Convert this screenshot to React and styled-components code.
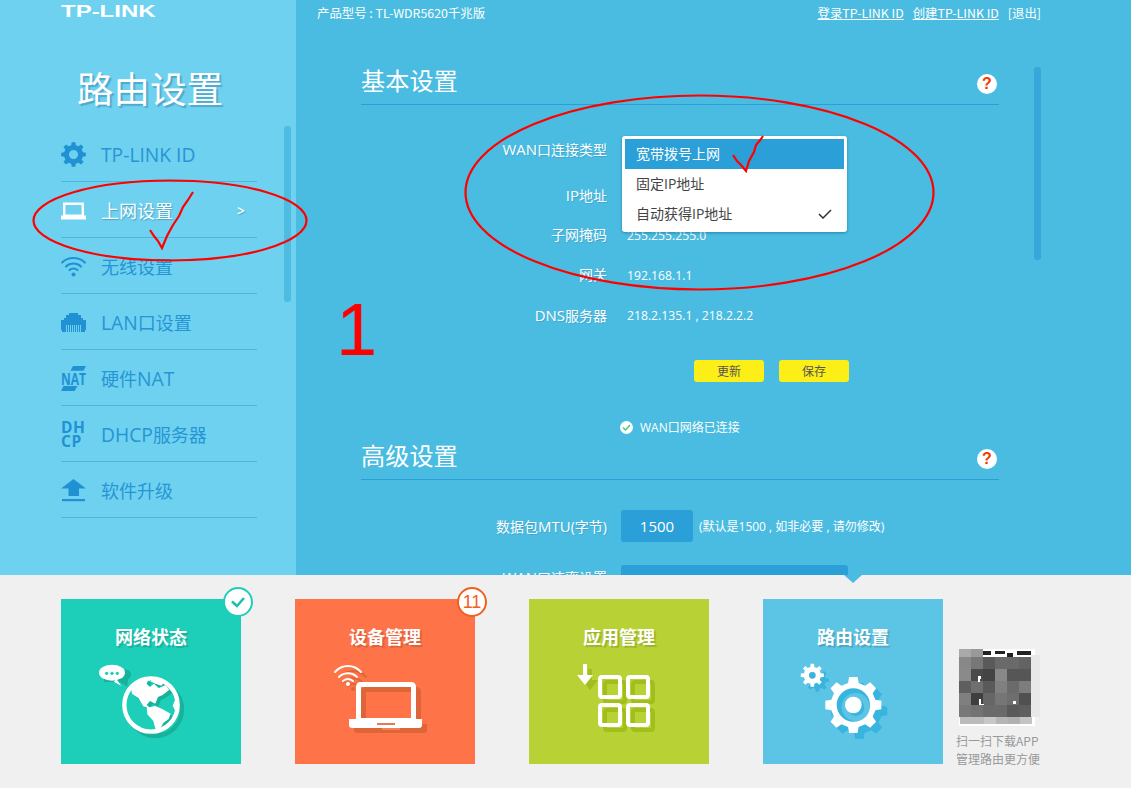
import React from "react";
import styled, { createGlobalStyle } from "styled-components";

const SANS = `"Open Sans", "Noto Sans CJK SC", sans-serif`;

const Global = createGlobalStyle`
  html, body { margin: 0; padding: 0; background: #f0f0f0; }
  body { font-family: ${SANS}; }
`;

const Page = styled.div`
  position: relative;
  width: 1131px;
  height: 788px;
  overflow: hidden;
  display: flex;
  flex-direction: column;
`;
const Upper = styled.div`
  height: 575px;
  display: flex;
  overflow: hidden;
  flex: none;
`;

/* Latin runs sit a little wider in the reference's UI font */
const Lat = styled.span`
  font-size: 1.07em;
`;
const mix = (text) =>
  text.split(/([A-Za-z][A-Za-z -]*)/).map((part, i) => (i % 2 ? <Lat key={i}>{part}</Lat> : part));

/* ---------- sidebar ---------- */
const Sidebar = styled.aside`
  position: relative;
  width: 296px;
  flex: none;
  background: #6ed1f0;
  padding-left: 61px;
  box-sizing: border-box;
`;
const Logo = styled.div`
  margin-top: 2px;
  height: 20px;
  font-family: "Liberation Sans", sans-serif;
  font-weight: 700;
  font-size: 17px;
  line-height: 20px;
  color: #fff;
  transform: scaleX(1.41);
  transform-origin: left center;
`;
const SideTitle = styled.h1`
  margin: 41px 0 13px 16px;
  font-size: 36.5px;
  line-height: 50px;
  height: 50px;
  font-weight: 400;
  color: #fff;
  text-shadow: 2px 2px 1px rgba(40, 120, 160, 0.45);
  font-family: "Noto Sans CJK SC", sans-serif;
`;
const Nav = styled.nav`
  width: 196px;
  display: flex;
  flex-direction: column;
`;
const NavRow = styled.div`
  position: relative;
  height: 56px;
  box-sizing: border-box;
  padding-top: 1px;
  border-bottom: 1px solid #4db6d9;
  display: flex;
  align-items: center;
  gap: 15px;
  font-size: 18px;
  color: ${(p) => (p.$active ? "#fff" : "#2795d4")};
  text-shadow: ${(p) => (p.$active ? "1px 1px 1px rgba(40,120,160,.5)" : "none")};
`;
const NavIcon = styled.span`
  width: 25px;
  height: 25px;
  flex: none;
  display: flex;
  align-items: center;
  justify-content: center;
  svg { display: block; overflow: visible; }
`;
const NavArrow = styled.span`
  margin-left: auto;
  margin-right: 12px;
  font-size: 14px;
  font-weight: 600;
`;
const DhcpMark = styled.span`
  display: block;
  width: 25px;
  font: 700 15.5px/14px "Open Sans", sans-serif;
  color: #2092d4;
  letter-spacing: 0.5px;
  white-space: pre-line;
`;
const Thumb = styled.div`
  position: absolute;
  left: ${(p) => p.$x}px;
  top: ${(p) => p.$y}px;
  height: ${(p) => p.$h}px;
  width: 7px;
  border-radius: 3px;
  background: ${(p) => p.$c};
`;

/* ---------- main ---------- */
const Main = styled.main`
  position: relative;
  flex: 1;
  background: #4abce1;
  color: #fff;
`;
const TopBar = styled.header`
  height: 26px;
  padding: 0 90px 0 21px;
  display: flex;
  align-items: center;
  font-size: 12.4px;
  font-family: "Noto Sans CJK SC", sans-serif;
`;
const TopLink = styled.a`
  color: #fff;
  text-decoration: ${(p) => (p.$plain ? "none" : "underline")};
  margin-left: ${(p) => (p.$gap ? `${p.$gap}px` : "auto")};
`;
const Content = styled.div`
  margin-left: 65px;
  width: 638px;
`;
const SectionHead = styled.div`
  height: 44px;
  box-sizing: border-box;
  border-bottom: 1px solid #2b9dd8;
  padding: 0 2px 8px 0;
  display: flex;
  align-items: flex-end;
  justify-content: space-between;
  margin-top: ${(p) => p.$top}px;
`;
const SectionTitle = styled.h2`
  margin: 0;
  font-size: 24.200px;
  line-height: 32px;
  font-weight: 400;
  font-family: "Noto Sans CJK SC", sans-serif;
`;
const Help = styled.span`
  width: 20px;
  height: 20px;
  margin-bottom: 2px;
  border-radius: 50%;
  background: #fff;
  color: #ef3a00;
  font: 700 16px/20px "Liberation Sans", sans-serif;
  text-align: center;
`;
const Form = styled.div`
  margin-top: 24px;
`;
const Row = styled.div`
  height: 40px;
  display: flex;
  align-items: center;
  margin-bottom: ${(p) => p.$after || 0}px;
`;
const Label = styled.label`
  width: 246px;
  flex: none;
  text-align: right;
  font-size: 14px;
  line-height: 20px;
  white-space: nowrap;
  margin-bottom: ${(p) => p.$lift || 0}px;
  text-shadow: 1px 1px 0 rgba(40, 120, 160, 0.3);
`;
const Value = styled.div`
  position: relative;
  margin: 1px 0 0 20px;
  font-size: 12.2px;
  line-height: 18px;
`;
const Dropdown = styled.ul`
  position: absolute;
  z-index: 2;
  left: -5px;
  top: -14px;
  width: 225px;
  height: 96px;
  box-sizing: border-box;
  margin: 0;
  padding: 3px;
  list-style: none;
  background: #fff;
  border-radius: 3px;
  box-shadow: 0 1px 3px rgba(0, 70, 110, 0.45);
`;
const DropItem = styled.li`
  height: 30px;
  display: flex;
  align-items: center;
  justify-content: space-between;
  padding: 0 12px 0 11px;
  font-size: 14px;
  color: ${(p) => (p.$on ? "#fff" : "#444")};
  background: ${(p) => (p.$on ? "#2a9fd8" : "transparent")};
`;
const Buttons = styled.div`
  margin: 25px 0 0 333px;
  display: flex;
  gap: 15px;
`;
const YellowButton = styled.button`
  width: 70px;
  height: 22px;
  padding: 0;
  border: 0;
  border-radius: 3px;
  background: #fcee17;
  color: #555;
  font-size: 12px;
  font-family: inherit;
`;
const Status = styled.div`
  margin: 37px 0 1px 259px;
  height: 16px;
  display: flex;
  align-items: center;
  gap: 7px;
  font-size: 12px;
`;
const StatusDot = styled.span`
  width: 13px;
  height: 13px;
  border-radius: 50%;
  background: #fff;
  display: flex;
  align-items: center;
  justify-content: center;
`;
const FieldRow = styled.div`
  display: flex;
  align-items: center;
  height: 32px;
  margin-top: ${(p) => p.$top}px;
`;
const FieldBox = styled.div`
  margin-left: 14px;
  width: ${(p) => p.$w}px;
  height: 32px;
  flex: none;
  border-radius: 3px;
  background: #2a9fd8;
  font-size: 15px;
  line-height: 32px;
  text-align: center;
`;
const Hint = styled.span`
  margin-left: 6px;
  font-size: 12px;
  white-space: nowrap;
`;

/* ---------- dock ---------- */
const Dock = styled.section`
  flex: 1;
  background: #f0f0f0;
  padding: 24px 0 0 61px;
  display: flex;
  align-items: flex-start;
`;
const Tiles = styled.div`
  display: flex;
  gap: 54px;
`;
const Tile = styled.div`
  position: relative;
  width: 180px;
  height: 165px;
  background: ${(p) => p.$bg};
  display: flex;
  flex-direction: column;
  align-items: center;
`;
const TileTitle = styled.div`
  margin-top: 25px;
  height: 26px;
  font-size: 18px;
  line-height: 25px;
  font-weight: 700;
  color: #fff;
  font-family: "Noto Sans CJK SC", sans-serif;
  text-shadow: 2px 2px 1px rgba(0, 0, 0, 0.15);
`;
const TileArt = styled.svg`
  display: block;
  width: 180px;
  height: 114px;
`;
const Badge = styled.span`
  position: absolute;
  top: -12px;
  right: -12px;
  width: 30px;
  height: 30px;
  box-sizing: border-box;
  border: 2.5px solid ${(p) => p.$c};
  border-radius: 50%;
  background: #fff;
  color: ${(p) => p.$c};
  font: 400 18px/25px "Liberation Sans", sans-serif;
  text-align: center;
  display: flex;
  align-items: center;
  justify-content: center;
`;
const Pointer = styled.span`
  position: absolute;
  top: -24px;
  left: 81px;
  width: 0;
  height: 0;
  border-left: 9px solid transparent;
  border-right: 9px solid transparent;
  border-top: 8px solid #4abce1;
`;
const AppBox = styled.div`
  margin: 50px 0 0 13px;
  width: 88px;
  color: #999;
  font-size: 12px;
  line-height: 18px;
  font-family: "Noto Sans CJK SC", sans-serif;
  svg { display: block; margin: 0 0 6px 3px; }
`;

/* ---------- annotations ---------- */
const Marks = styled.svg`
  position: absolute;
  left: 0;
  top: 0;
  width: 1131px;
  height: 788px;
  pointer-events: none;
  z-index: 5;
`;
const BigOne = styled.div`
  position: absolute;
  z-index: 5;
  left: 336px;
  top: 287px;
  color: #f00;
  font: 400 74px/85px "Liberation Sans", sans-serif;
`;

/* ---------- drawings ---------- */
function gear(cx, cy, ro, ri, n, start = -Math.PI / 2) {
  const pts = [];
  const step = (Math.PI * 2) / n;
  for (let i = 0; i < n; i++) {
    const a = start + i * step;
    const wi = step * 0.3;
    const wo = step * 0.19;
    [[ri, -wi], [ro, -wo], [ro, wo], [ri, wi]].forEach(([r, d]) => {
      pts.push(`${(cx + r * Math.cos(a + d)).toFixed(2)} ${(cy + r * Math.sin(a + d)).toFixed(2)}`);
    });
  }
  return "M" + pts.join("L") + "Z";
}

const Blue = "#2092d4";

const IconGear = () => (
  <svg width="25" height="25" viewBox="0 0 25 25">
    <path fill={Blue} fillRule="evenodd" d={gear(12.5, 12.5, 12.5, 9.6, 8) + "M12.5 8a4.5 4.5 0 1 0 .01 0Z"} />
  </svg>
);
const IconLaptop = () => (
  <svg width="25" height="25" viewBox="0 0 25 25">
    <path fill="none" stroke="#fff" strokeWidth="2.400" d="M3.200 5.700h18.600v12h-18.600z" />
    <path fill="#fff" d="M0 17.500h25v4H0z" />
  </svg>
);
const IconWifi = () => (
  <svg width="25" height="25" viewBox="0 0 25 25">
    <g fill="none" stroke={Blue} strokeWidth="2.200" strokeLinecap="round">
      <path d="M1.200 8.500c6-6 16.600-6 22.600 0" />
      <path d="M5 12.500c4-4 11-4 15 0" />
      <path d="M8.600 16c2-2 5.800-2 7.800 0" />
    </g>
    <circle cx="12.500" cy="20.500" r="2" fill={Blue} />
  </svg>
);
const IconLan = () => (
  <svg width="25" height="25" viewBox="0 0 25 25">
    <path fill={Blue} d="M8 3h9v2h3v3h2v2h3v10h-1v2H1v-2H0V10h3V8h2V5h3z" />
    <g fill="#6ed1f0">
      {[5.5, 7.5, 9.5, 11.5, 13.5, 15.5, 17.5, 19.5].map((x) => (
        <rect key={x} x={x - 0.5} y="15" width="1" height="7" />
      ))}
    </g>
  </svg>
);
const IconNat = () => (
  <svg width="25" height="25" viewBox="0 0 25 25">
    <path fill={Blue} d="M12 0h13l-2.500 4.700H9.500zM2.500 20h14l-3 5H0z" />
    <text x="0" y="18.500" fontFamily="Open Sans, sans-serif" fontWeight="700" fontSize="16.500" fill={Blue} textLength="25" lengthAdjust="spacingAndGlyphs">NAT</text>
  </svg>
);
const IconUpload = () => (
  <svg width="25" height="25" viewBox="0 0 25 25">
    <path fill={Blue} d="M12.500 1L25 10.500h-7V18H7.500v-7.500H0z" />
    <rect x="1" y="21" width="23" height="2.200" fill={Blue} />
  </svg>
);

const LAND = [
  "M124 102L148 80L176 70L170 86L180 96L192 86L206 100L226 90L238 104L218 120L204 126L196 146L180 138L170 150L184 162L160 154L146 130L126 116Z",
  "M170 158L196 153L218 163L242 176L236 192L220 204L208 226L198 228L190 198L172 178Z",
  "M180 78L204 68L224 80L214 92L196 86Z",
  "M246 106L264 138L260 176L248 152L256 132Z",
];
const GlobeShape = ({ c }) => (
  <g>
    <circle cx="183" cy="150" r="80" fill="none" stroke={c} strokeWidth="13" />
    <path fill={c} d={LAND.join("")} />
  </g>
);
const GlobeArt = () => (
  <TileArt viewBox="0 0 180 114">
    <g transform="translate(29 5) scale(.3333)">
      <path d="M42 45h60a10 10 0 0 1 12 28l-2 22-22-14H42z" fill="#17b19c" />
      <g transform="translate(13 13)">
        <circle cx="183" cy="150" r="80" fill="none" stroke="#17b19c" strokeWidth="13" />
      </g>
      <circle cx="183" cy="150" r="76" fill="#1dcfb9" />
      <g transform="translate(9 9)"><path fill="#17b19c" d={LAND.slice(0, 3).join("")} /></g>
      <GlobeShape c="#fff" />
      <ellipse cx="66" cy="53" rx="39" ry="24" fill="#fff" />
      <path d="M78 70L94 93L72 80Z" fill="#fff" />
      <circle cx="50" cy="55" r="5" fill="#1dcfb9" />
      <circle cx="66" cy="55" r="5" fill="#1dcfb9" />
      <circle cx="82" cy="55" r="5" fill="#1dcfb9" />
    </g>
  </TileArt>
);
const LaptopShape = ({ c }) => (
  <g>
    <rect x="63.500" y="34.500" width="55" height="36" rx="2" fill="none" stroke={c} strokeWidth="5" />
    <path fill={c} d="M54 69h73v6a3 3 0 0 1-3 3H57a3 3 0 0 1-3-3z" />
  </g>
);
const WifiArc = ({ c, dx = 0 }) => (
  <g transform={`translate(${dx} ${dx})`} fill="none" stroke={c} strokeWidth="2" strokeLinecap="round">
    <path d="M40 22c7-8 19-8 26 0" />
    <path d="M44 27c5-5 13-5 18 0" />
    <path d="M48 31c3-2.500 7-2.500 10 0" />
  </g>
);
const LaptopArt = () => (
  <TileArt viewBox="0 0 180 114">
    <g transform="translate(5 5)"><LaptopShape c="#dd6538" /></g>
    <WifiArc c="#dd6538" dx={5} />
    <circle cx="58" cy="39" r="2" fill="#dd6538" />
    <LaptopShape c="#fff" />
    <WifiArc c="#fff" />
    <circle cx="53" cy="34" r="2" fill="#fff" />
    <rect x="82" y="73" width="18" height="2" fill="#e7794e" />
    <rect x="87" y="78" width="18" height="2" fill="#ee8358" />
  </TileArt>
);
const AppShape = ({ c }) => (
  <g>
    <g fill="none" stroke={c} strokeWidth="4">
      <rect x="71" y="27" width="20" height="20" rx="2" />
      <rect x="99" y="27" width="20" height="20" rx="2" />
      <rect x="71" y="55" width="20" height="20" rx="2" />
      <rect x="99" y="55" width="20" height="20" rx="2" />
    </g>
    <path fill={c} d="M54 14h4v11h6l-8 10-8-10h6z" />
  </g>
);
const AppArt = () => (
  <TileArt viewBox="0 0 180 114">
    <g transform="translate(5 5)"><AppShape c="#a0bf1c" /></g>
    <AppShape c="#fff" />
  </TileArt>
);
const RouterArt = () => (
  <TileArt viewBox="0 0 180 114">
    <g transform="translate(27 5) scale(.3333)">
      <path fill="#38b4de" d={gear(82, 76, 35, 26, 8)} />
      <path fill="#38b4de" d={gear(208, 168, 85, 68, 8)} />
      <path fill="#fff" d={gear(67, 61, 35, 26, 8)} />
      <circle cx="67" cy="61" r="10" fill="#38b4de" />
      <path fill="#fff" d={gear(190, 150, 85, 68, 8)} />
      <circle cx="190" cy="150" r="50" fill="#38b4de" />
      <circle cx="197" cy="156" r="42" fill="#5cc5e6" />
      <circle cx="198" cy="158" r="25" fill="#38b4de" />
      <circle cx="190" cy="150" r="25" fill="#fff" />
    </g>
  </TileArt>
);

const QR_ROWS = [
  ["#888", "#777", "#5a5a5a", "#6a6a6a", "#6a6a6a", "#636363"],
  ["#8a8a8a", "#4a4a4a", "#444", "#888", "#565656", "#565656"],
  ["#5f5f5f", "#6f6f6f", "#5a5a5a", "#808080", "#6b6b6b", "#7d7d7d"],
  ["#7f7f7f", "#3f3f3f", "#666", "#767676", "#6e6e6e", "#505050"],
  ["#787878", "#727272", "#6a6a6a", "#6a6a6a", "#5a5a5a", "#5e5e5e"],
];
const QR_FOOT = ["#bbb", "#bbb", "#c8c8c8", "#b5b5b5", "#b0b0b0", "#c4c4c4"];
const QrArt = () => (
  <svg width="82" height="77" viewBox="0 0 82 77">
    <rect x="0" y="0" width="76" height="77" fill="#fff" />
    <rect x="72" y="6" width="9" height="62" fill="#e8e8e8" />
    <path d="M24 2h8v4h-8zM36 2h10v3h-10zM48 4h6v4h-6zM58 2h14v4h-14z" fill="#222" />
    <rect x="0" y="0" width="12" height="8" fill="#a9a9a9" />
    <rect x="12" y="0" width="12" height="8" fill="#999" />
    {QR_ROWS.map((row, r) =>
      row.map((c, i) => <rect key={`${r}-${i}`} x={i * 12} y={8 + r * 12} width="12" height="12" fill={c} />)
    )}
    {QR_FOOT.map((c, i) => <rect key={i} x={i * 12 + 1} y="68" width="12" height="7" fill={c} />)}
    <path d="M19 27h3v3h-1v3h-2zM20 50h2v5h3v1h-5zM54 52h3v3h-3z" fill="#fff" />
  </svg>
);

const navItems = [
  { t: "TP-LINK ID", i: <IconGear /> },
  { t: "上网设置", i: <IconLaptop />, active: true },
  { t: "无线设置", i: <IconWifi /> },
  { t: "LAN口设置", i: <IconLan /> },
  { t: "硬件NAT", i: <IconNat /> },
  { t: "DHCP服务器", i: <DhcpMark>{"DH\nCP"}</DhcpMark> },
  { t: "软件升级", i: <IconUpload /> },
];

export default function App() {
  return (
    <Page>
      <Global />
      <Upper>
        <Sidebar>
          <Logo>TP-LINK</Logo>
          <SideTitle>路由设置</SideTitle>
          <Nav>
            {navItems.map((n) => (
              <NavRow key={n.t} $active={n.active}>
                <NavIcon>{n.i}</NavIcon>
                <span>{mix(n.t)}</span>
                {n.active && <NavArrow>&gt;</NavArrow>}
              </NavRow>
            ))}
          </Nav>
          <Thumb $x={284} $y={126} $h={176} $c="#4dbce0" />
        </Sidebar>
        <Main>
          <TopBar>
            <span>产品型号 : TL-WDR5620千兆版</span>
            <TopLink>登录TP-LINK ID</TopLink>
            <TopLink $gap={9}>创建TP-LINK ID</TopLink>
            <TopLink $gap={9} $plain>[退出]</TopLink>
          </TopBar>
          <Content>
            <SectionHead $top={35}>
              <SectionTitle>基本设置</SectionTitle>
              <Help>?</Help>
            </SectionHead>
            <Form>
              <Row $after={6}>
                <Label>{mix("WAN口连接类型")}</Label>
                <Value>
                  <Dropdown>
                    <DropItem $on>宽带拨号上网</DropItem>
                    <DropItem>固定IP地址</DropItem>
                    <DropItem>
                      自动获得IP地址
                      <svg width="14" height="10" viewBox="0 0 14 10">
                        <path d="M1 5l4 4 8-8" fill="none" stroke="#333" strokeWidth="1.500" />
                      </svg>
                    </DropItem>
                  </Dropdown>
                </Value>
              </Row>
              <Row><Label>{mix("IP地址")}</Label></Row>
              <Row><Label>子网掩码</Label><Value>255.255.255.0</Value></Row>
              <Row><Label>网关</Label><Value>192.168.1.1</Value></Row>
              <Row><Label>{mix("DNS服务器")}</Label><Value>218.2.135.1 , 218.2.2.2</Value></Row>
            </Form>
            <Buttons>
              <YellowButton>更新</YellowButton>
              <YellowButton>保存</YellowButton>
            </Buttons>
            <Status>
              <StatusDot>
                <svg width="9" height="7" viewBox="0 0 9 7">
                  <path d="M1 3.500l2.500 2.500L8 1" fill="none" stroke="#3fc87a" strokeWidth="1.300" />
                </svg>
              </StatusDot>
              WAN口网络已连接
            </Status>
            <SectionHead $top={0}>
              <SectionTitle>高级设置</SectionTitle>
              <Help>?</Help>
            </SectionHead>
            <FieldRow $top={30}>
              <Label>{mix("数据包MTU(字节)")}</Label>
              <FieldBox $w={72}>1500</FieldBox>
              <Hint>(默认是1500 , 如非必要 , 请勿修改)</Hint>
            </FieldRow>
            <FieldRow $top={23}>
              <Label $lift={8}>{mix("WAN口速率设置")}</Label>
              <FieldBox $w={227} />
            </FieldRow>
          </Content>
          <Thumb $x={738} $y={67} $h={193} $c="#35a8d9" />
        </Main>
      </Upper>
      <Dock>
        <Tiles>
          <Tile $bg="#1dcfb9">
            <Badge $c="#1dcfb9">
              <svg width="16" height="12" viewBox="0 0 16 12">
                <path d="M2 5.500l5 4.500 7-8" fill="none" stroke="#1dbfa9" strokeWidth="2.500" />
              </svg>
            </Badge>
            <TileTitle>网络状态</TileTitle>
            <GlobeArt />
          </Tile>
          <Tile $bg="#ff7348">
            <Badge $c="#f0611e">11</Badge>
            <TileTitle>设备管理</TileTitle>
            <LaptopArt />
          </Tile>
          <Tile $bg="#b8d235">
            <TileTitle>应用管理</TileTitle>
            <AppArt />
          </Tile>
          <Tile $bg="#5cc5e6">
            <Pointer />
            <TileTitle>路由设置</TileTitle>
            <RouterArt />
          </Tile>
        </Tiles>
        <AppBox>
          <QrArt />
          扫一扫下载APP
          <br />
          管理路由更方便
        </AppBox>
      </Dock>
      <BigOne>1</BigOne>
      <Marks viewBox="0 0 1131 788">
        <g fill="none" stroke="#f00" strokeWidth="2.200">
          <ellipse cx="170" cy="220.500" rx="136.500" ry="40" />
          <ellipse cx="699.500" cy="192.500" rx="234" ry="97" />
          <path d="M150 230l4 6 4 5 4 7 5-12 6-11 6-9 4-9 5-7 5-8" />
          <path d="M733 155l4 6 4 4 5 6 3-10 5-9 2-7 5-6 2-3" />
        </g>
      </Marks>
    </Page>
  );
}
